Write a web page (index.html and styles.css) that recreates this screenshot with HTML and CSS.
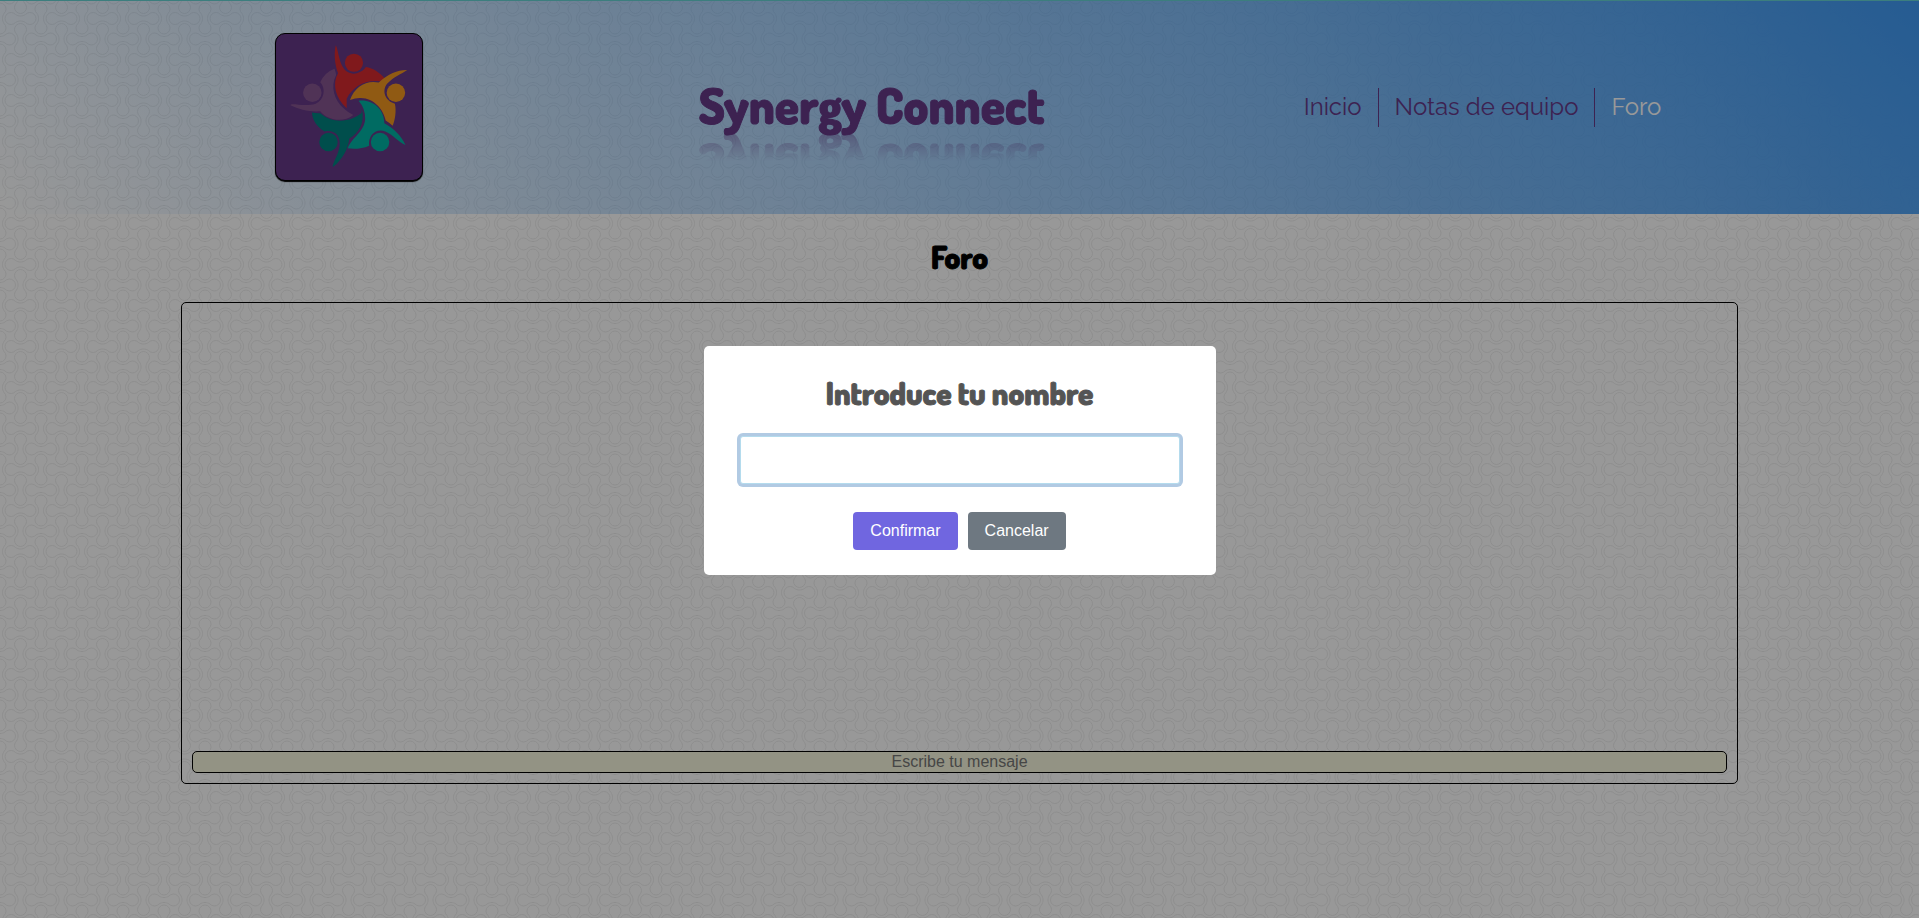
FILE: index.html
```html
<!DOCTYPE html>
<html lang="es">
<head>
<meta charset="utf-8">
<meta name="viewport" content="width=device-width, initial-scale=1">
<title>Synergy Connect</title>
<link rel="stylesheet" href="styles.css">
</head>
<body>
<header class="header">
  <svg class="logo" viewBox="44 42 442 442" role="img" aria-label="Logo">
    <g fill="#d62a30">
      <circle cx="280" cy="129" r="27.500"/>
      <path d="M225 76C231 85 234 120 245 140C254 158 271 165 289 161C302 157 311 150 316 142C338 145 359 159 374 178Q364 183 355 185C311 181 275 203 258 238V267C224 237 213 192 232 161C220 130 220 96 225 76Z"/>
    </g>
    <g fill="#f19721">
      <circle cx="407" cy="220" r="28"/>
      <path d="M441 151C423 164 401 171 381 192C363 213 374 245 404 253C409 277 404 303 397 320Q385 309 376 304C369 270 341 237 301 236Q286 235 268 242C281 202 319 180 355 189C384 162 415 150 441 151Z"/>
    </g>
    <g fill="#00b3a3">
      <circle cx="359" cy="369" r="28"/>
      <path d="M294 244C337 239 372 270 372 312C403 329 424 351 436 378C415 370 401 348 375 337C344 326 322 352 326 380C306 389 282 391 261 388C275 353 311 339 314 299Q314 266 294 244Z"/>
    </g>
    <g fill="#00827f">
      <circle cx="203" cy="369" r="28"/>
      <path d="M304 268C314 309 295 342 266 358C263 391 243 423 217 444C211 440 234 408 237 378C239 345 217 331 191 337C169 325 153 302 153 280Q167 283 178 282C220 318 275 305 303 281Z"/>
    </g>
    <g fill="#865690">
      <circle cx="154" cy="220" r="28"/>
      <path d="M221 147Q225 157 226 166C208 201 219 242 252 270Q262 280 278 287C249 311 202 305 178 276C145 278 113 271 88 258C88 249 132 264 164 253C190 242 196 207 178 188Q191 158 221 147Z"/>
    </g>
  </svg>
  <h1 class="brand">Synergy Connect</h1>
  <nav class="nav">
    <a class="nav-link" href="#inicio">Inicio</a>
    <a class="nav-link" href="#notas">Notas de equipo</a>
    <a class="nav-link active" href="#foro">Foro</a>
  </nav>
</header>
<main class="main">
  <h2 class="page-title">Foro</h2>
  <section class="chat">
    <div class="messages"></div>
    <input class="message-input" type="text" placeholder="Escribe tu mensaje" aria-label="Escribe tu mensaje">
  </section>
</main>
<div class="overlay">
  <form class="modal" role="dialog" aria-labelledby="modal-title">
    <label class="modal-title" id="modal-title" for="name">Introduce tu nombre</label>
    <input class="modal-input" id="name" type="text">
    <div class="actions">
      <button class="btn confirm" type="button">Confirmar</button>
      <button class="btn cancel" type="button">Cancelar</button>
    </div>
  </form>
</div>
</body>
</html>
```

FILE: styles.css
```css
* { box-sizing: border-box; }

body {
  margin: 0;
  min-height: 100vh;
  font-family: "Liberation Sans", Arial, sans-serif;
  font-size: 16px;
  background-color: #fefefe;
  background-image: url("data:image/svg+xml,%3Csvg xmlns='http://www.w3.org/2000/svg' xmlns:xlink='http://www.w3.org/1999/xlink' width='41' height='41' viewBox='0 0 41 41'%3E%3Cdefs%3E%3Cpath id='h' d='M-5-4C-2-2 2-2 5-4A6 6 0 1 1 5 4C2 2-2 2-5 4A6 6 0 1 1-5-4Z'/%3E%3Cg id='p'%3E%3Cuse xlink:href='%23h'/%3E%3Cuse xlink:href='%23h' transform='translate(20.500 0) rotate(90)'/%3E%3C/g%3E%3C/defs%3E%3Cg fill='none' stroke='%23ececec'%3E%3Cuse xlink:href='%23p' x='20.500' y='18.500'/%3E%3Cuse xlink:href='%23p' x='-20.500' y='18.500'/%3E%3Cuse xlink:href='%23p' x='0' y='39'/%3E%3Cuse xlink:href='%23p' x='41' y='39'/%3E%3Cuse xlink:href='%23p' x='-41' y='39'/%3E%3Cuse xlink:href='%23p' x='0' y='-2'/%3E%3Cuse xlink:href='%23p' x='41' y='-2'/%3E%3Cuse xlink:href='%23p' x='20.500' y='59.500'/%3E%3Cuse xlink:href='%23p' x='-20.500' y='59.500'/%3E%3C/g%3E%3C/svg%3E");
}

.header {
  display: flex;
  align-items: center;
  justify-content: space-around;
  padding: 0 120px;
  background: linear-gradient(45deg, rgba(63, 153, 243, 0), #3f99f3);
  box-shadow: inset 0 1px #65d3d3;
}

.logo {
  width: 148px;
  height: 148px;
  margin: 33px;
  border: 1px solid #000;
  border-radius: 10px;
  background: #663987;
  box-shadow: 0 1px 1px #000;
}

.brand {
  margin: 0;
  padding-bottom: 4px;
  font-family: Dosis, Roboto, sans-serif;
  font-size: 49px;
  line-height: 54px;
  font-weight: 800;
  color: #663987;
  -webkit-text-stroke: 1px #663987;
  -webkit-box-reflect: below -4px linear-gradient(transparent 50%, rgba(0, 0, 0, 0.4));
}

.nav { display: flex; }

.nav-link {
  padding: 0 16px 1px;
  border-left: 1px solid #663987;
  font-family: Raleway, Lato, sans-serif;
  font-size: 24px;
  line-height: 38px;
  color: #663987;
  text-decoration: none;
}

.nav-link:first-child { border-left: 0; }
.nav-link.active { color: #fff; }

.main {
  display: flex;
  flex-direction: column;
  align-items: center;
}

.page-title {
  margin: 23px 0 25px;
  font-family: Dosis, Roboto, sans-serif;
  font-size: 31px;
  line-height: 40px;
  font-weight: 800;
  -webkit-text-stroke: 1px #000;
}

.chat {
  box-sizing: content-box;
  width: 80%;
  padding: 10px;
  border: 1px solid #000;
  border-radius: 5px;
}

.messages { height: 438px; }

.message-input {
  display: block;
  width: 100%;
  height: 22px;
  padding: 0;
  border: 1px solid #000;
  border-radius: 5px;
  background: #f5f5dc;
  font: inherit;
  text-align: center;
}

.overlay {
  position: fixed;
  inset: 0;
  display: flex;
  align-items: center;
  justify-content: center;
  padding: 12px 10px 10px;
  background: rgba(0, 0, 0, 0.4);
}

.modal {
  display: flex;
  flex-direction: column;
  width: 512px;
  padding: 22px 36px 25px;
  border-radius: 5px;
  background: #fff;
}

.modal-title {
  font-family: Dosis, Roboto, sans-serif;
  font-size: 31px;
  line-height: 50px;
  font-weight: 800;
  text-align: center;
  color: #545454;
  -webkit-text-stroke: 1px #545454;
}

.modal-input {
  height: 48px;
  margin: 18px 0 28px;
  padding: 0 12px;
  border: 1px solid #b4dbed;
  border-radius: 3px;
  outline: none;
  box-shadow: 0 0 0 3px #b1cae3;
  font-size: 18px;
}

.actions {
  display: flex;
  justify-content: center;
  gap: 10px;
}

.btn {
  padding: 0 17px;
  border: 0;
  border-radius: 4px;
  font-family: inherit;
  font-size: 16px;
  line-height: 38px;
  color: #fff;
}

.confirm { background: #7066e0; }
.cancel { background: #6e7881; }
```
